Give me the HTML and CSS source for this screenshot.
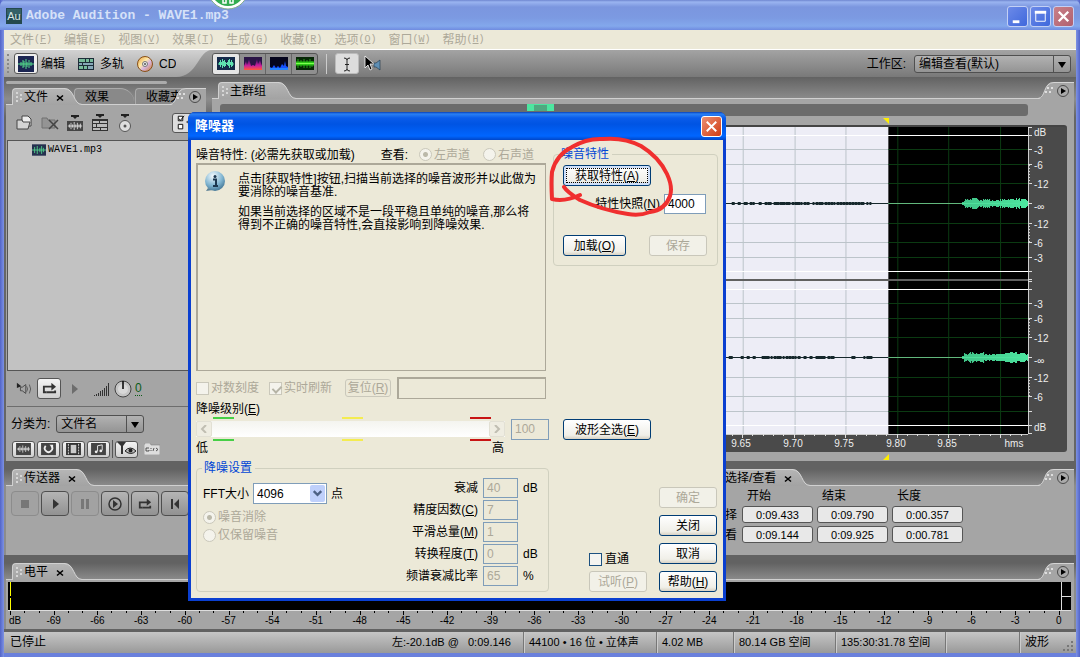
FILE: index.html
```html
<!DOCTYPE html>
<html lang="zh-CN">
<head>
<meta charset="utf-8">
<title>Adobe Audition - WAVE1.mp3</title>
<link rel="stylesheet" href="styles.css">
</head>
<body>
<svg class="defs" aria-hidden="true">
  <defs>
    <linearGradient id="lightBar" x1="0" y1="0" x2="0" y2="1"><stop offset="0" stop-color="#d2d2d2"/><stop offset="1" stop-color="#a2a2a2"/></linearGradient>
    <linearGradient id="tabFill" x1="0" y1="0" x2="0" y2="1"><stop offset="0" stop-color="#b5b5b5"/><stop offset="1" stop-color="#a3a3a3"/></linearGradient>
    <linearGradient id="cd" x1="0" y1="0" x2="1" y2="1"><stop offset="0" stop-color="#e79a31"/><stop offset=".4" stop-color="#ffe9a8"/><stop offset=".6" stop-color="#d7b4e0"/><stop offset="1" stop-color="#cf7c24"/></linearGradient>
    <linearGradient id="flame" x1="0" y1="0" x2="0" y2="1"><stop offset="0" stop-color="#3a1464"/><stop offset=".6" stop-color="#c81e9c"/><stop offset="1" stop-color="#ff5a3c"/></linearGradient>
    <radialGradient id="ball" cx=".4" cy=".25" r=".8"><stop offset="0" stop-color="#f4fbff"/><stop offset=".6" stop-color="#7fb4d0"/><stop offset="1" stop-color="#3d6f8e"/></radialGradient>
    <symbol id="grip" viewBox="0 0 8 12"><path d="M1 1h2v2h-2zM5 3h2v2h-2zM1 5h2v2h-2zM5 7h2v2h-2zM1 9h2v2h-2z" fill="#d6d6d6"/></symbol>
    <symbol id="x" viewBox="0 0 8 8"><path d="M1 1.500L7 6.500M7 1.500L1 6.500" stroke="#000" stroke-width="1.600"/></symbol>
    <symbol id="curve" viewBox="0 0 18 17"><path d="M0 0C11 0 9 16 18 16V17H0Z" fill="url(#tabFill)"/><path d="M0 .5C11 .5 9 16.500 18 16.500" fill="none" stroke="#d4d4d4"/></symbol>
    <symbol id="corner" viewBox="0 0 36 17"><path d="M0 17C8 17 4 0 16 0H36V17Z" fill="#a5a5a5"/><path d="M0 16.500C8 16 5 .5 16 .5H36" fill="none" stroke="#d4d4d4"/><path d="M7 9h2v2h-2zM11 9h2v2h-2zM9 5h2v2h-2zM13 5h2v2h-2z" fill="#dedede"/><circle cx="25" cy="9" r="5.500" fill="#aaa" stroke="#4b4b4b"/><path d="M23 6l5 3-5 3z" fill="#000"/></symbol>
    <symbol id="wave" viewBox="0 0 16 16"><rect width="16" height="16" fill="#1b2552"/><path d="M0 8h16M3 6v4M5 4v8M6 5v6M8 3v10M9 6v5M11 4v8M13 6v4" stroke="#55d98b"/></symbol>
    <symbol id="bars" viewBox="0 0 18 10"><path d="M0 5h18M2 3v4M4 1v8M6 3v4M8 0v10M10 3v4M12 1v8M14 3v4M16 2v6" stroke="currentColor" stroke-width="1"/></symbol>
    <symbol id="loop" viewBox="0 0 16 12"><path d="M5 10H2V4h9" fill="none" stroke="#333" stroke-width="2"/><path d="M10 0l5 4-5 4z" fill="#333"/><path d="M14 8v2H5" fill="none" stroke="#333" stroke-width="2"/></symbol>
  </defs>
</svg>

<div class="window">
  <header class="titlebar">
    <svg class="app-icon" viewBox="0 0 16 16"><rect width="16" height="16" fill="#24494e"/><rect x="1" y="1" width="14" height="6" fill="#356167"/></svg>
    <span class="app-icon-text">Au</span>
    <h1>Adobe Audition - WAVE1.mp3</h1>
    <div class="win-buttons">
      <button aria-label="最小化"><svg viewBox="0 0 20 20"><path d="M5 14h7v3H5z" fill="#fff"/></svg></button>
      <button aria-label="最大化"><svg viewBox="0 0 20 20"><path d="M5 6h10v9H5z" fill="none" stroke="#fff"/><path d="M4 4h12v3H4z" fill="#fff"/></svg></button>
      <button class="close" aria-label="关闭窗口"><svg viewBox="0 0 20 20"><path d="M5 5l10 10M15 5L5 15" stroke="#fff" stroke-width="2.500"/></svg></button>
    </div>
  </header>
  <svg class="bubble" viewBox="0 0 40 12"><circle cx="20" cy="-11" r="20" fill="#fff" stroke="#82a98c"/><circle cx="20" cy="-11" r="17" fill="#33ac4f"/><path d="M15 0v3h3V0M22 0v3h3V0" stroke="#fff" stroke-width="1.500" fill="none"/></svg>

  <nav class="menubar">
    <button>文件<span>(<u>F</u>)</span></button><button>编辑<span>(<u>E</u>)</span></button><button>视图<span>(<u>V</u>)</span></button><button>效果<span>(<u>T</u>)</span></button><button>生成<span>(<u>G</u>)</span></button><button>收藏<span>(<u>R</u>)</span></button><button>选项<span>(<u>O</u>)</span></button><button>窗口<span>(<u>W</u>)</span></button><button>帮助<span>(<u>H</u>)</span></button>
  </nav>

  <div class="toolbar">
    <div class="modes">
      <i class="handle"></i>
      <button class="mode"><span class="mode-on"><svg viewBox="0 0 16 16"><use href="#wave"/></svg></span>编辑</button>
      <button class="mode"><svg viewBox="0 0 16 16"><path d="M0 2h16v12H0z" fill="#1d2d38"/><path d="M1 3h6v3H1zM8 3h3v3H8zM12 3h3v3h-3zM1 10h4v3H1zM6 10h3v3H6z" fill="#77ba9a"/><path d="M1 7h3v2H1zM5 7h10v2H5zM10 10h5v3h-5z" fill="#87a8b8"/></svg>多轨</button>
      <button class="mode"><svg viewBox="0 0 16 16"><circle cx="8" cy="8" r="7.500" fill="url(#cd)" stroke="#875019"/><circle cx="8" cy="8" r="2.500" fill="#eee" stroke="#777"/><circle cx="8" cy="8" r="1" fill="#555"/></svg>CD</button>
    </div>
    <svg class="modes-edge" viewBox="0 0 36 27" preserveAspectRatio="none"><path d="M0 0H36C22 0 22 27 0 27Z" fill="url(#lightBar)"/></svg>
    <div class="views">
      <button class="on" aria-label="波形"><svg viewBox="0 0 18 13"><rect width="18" height="13" fill="#142a4a"/><path d="M1 6.500h1V5h1V3h1v2h1V2h1v2h1V3h1v2h1v1h1V5h1V3h1V2h1v3h1V3h1v2h1v1.500h1v1h-1V9h-1v1h-1V8h-1v3h-1V9h-1V8h-1V7H9v2H8v1H7V9H6v2H5V8H4v2H3V8H2V7.500H1z" fill="#5fe2b0"/></svg></button>
      <button aria-label="频谱"><svg viewBox="0 0 18 13"><rect width="18" height="13" fill="#2a1446"/><path d="M0 13V9l2-5 1 4 2-6 2 7 2-1 2 1 2-7 1 5 2-4 2 6v4z" fill="url(#flame)"/></svg></button>
      <button aria-label="声像"><svg viewBox="0 0 18 13"><rect width="18" height="13" fill="#04041c"/><path d="M0 13V10l2 1 2-3 2 3 2-2 2 2 2-4 2 2 1-5 1 5 2 1v3z" fill="#1450ff"/><path d="M0 12h18" stroke="#34b4ff"/></svg></button>
      <button aria-label="相位"><svg viewBox="0 0 18 13"><rect width="18" height="13" fill="#062806"/><path d="M2 2v9M5 3v7M8 2v9M11 3v8M14 2v9M16 4v6" stroke="#25a818"/><path d="M0 6.500h18" stroke="#2cc818" stroke-width="4"/><path d="M0 6.500h18" stroke="#7dff50"/></svg></button>
    </div>
    <i class="rule"></i>
    <button class="tool on" aria-label="时间选择"><svg viewBox="0 0 22 20"><path d="M8 4q3 0 3 2v9q0 2-3 2M14 4q-3 0-3 2M14 17q-3 0-3-2M9 10.500h4" fill="none" stroke="#222"/></svg></button>
    <button class="tool plain" aria-label="滑动"><svg viewBox="0 0 22 20"><path d="M3 2v12l3-3 2 5 2-1-2-5h4z" fill="#000" stroke="#fff" stroke-width=".8"/><path d="M12 9h2l4-3v10l-4-3h-2z" fill="#5f8fb4" stroke="#1d3446" stroke-width=".6"/></svg></button>
    <label class="workspace-label" for="ws">工作区:</label>
    <div class="gray-select ws"><select id="ws"><option>编辑查看(默认)</option></select></div>
  </div>

  <div class="top">
    <section class="files">
      <div class="tab-scroll"></div>
      <div class="tabs">
        <div class="tab"><svg class="grip"><use href="#grip"/></svg>文件<svg class="x"><use href="#x"/></svg></div><svg class="curve"><use href="#curve"/></svg>
        <div class="tab back">效果</div>
        <div class="tab back last">收藏夹</div>
        <svg class="corner"><use href="#corner"/></svg>
      </div>
      <div class="panel files-body">
        <div class="file-tools">
          <button aria-label="打开"><svg viewBox="0 0 20 18"><path d="M7 2h6l3 3v7H7z" fill="#eee" stroke="#444"/><path d="M2 15V6h5l1 2h7l-2 7z" fill="#d4d4d4" stroke="#444"/></svg></button>
          <button aria-label="关闭文件"><svg viewBox="0 0 20 18"><path d="M2 14V4h5l1 2h7v8z" fill="#949494" stroke="#707070"/><path d="M9 6l9 9M18 6l-9 9" stroke="#444" stroke-width="1.500"/></svg></button>
          <button aria-label="插入到编辑"><svg viewBox="0 0 20 18" color="#e8e8e8"><path d="M6 1h8v2h-2l-2 2-2-2H6z" fill="#222"/><rect x="2" y="7" width="16" height="10" fill="#444"/><use href="#bars" x="2" y="8" width="16" height="8"/></svg></button>
          <button aria-label="插入到多轨"><svg viewBox="0 0 20 18"><path d="M6 0h8v2h-2l-2 2-2-2H6z" fill="#222"/><path d="M2 5h16v12H2z" fill="#333"/><path d="M3 7h6v2H3zM10 7h7v2h-7zM3 10h3v3H3zM7 10h10v3H7zM3 14h7v2H3zM11 14h6v2h-6z" fill="#bbb"/></svg></button>
          <button aria-label="插入到 CD"><svg viewBox="0 0 20 18"><path d="M6 0h8v2h-2l-2 2-2-2H6z" fill="#222"/><circle cx="10" cy="12" r="5.500" fill="#ddd" stroke="#555"/><circle cx="10" cy="12" r="1.500" fill="#555"/></svg></button>
          <button class="options" aria-label="选项"><svg viewBox="0 0 20 20"><path d="M2.500 2.500h5v5h-5zM2.500 11.500h5v5h-5z" fill="#fff" stroke="#000"/><path d="M3 5l2 2 4-5" fill="none" stroke="#000"/><path d="M11 9q4-4 8 0-4 4-8 0" fill="#555"/></svg></button>
        </div>
        <div class="file-list"><div class="file"><svg viewBox="0 0 16 13"><rect width="16" height="13" fill="#25304f"/><path d="M0 6.500h16M3 3v7M6 2v9M9 4v5M11 2v9M13 4v5" stroke="#54d38c"/></svg>WAVE1.mp3</div></div>
        <div class="preview">
          <svg class="speaker" viewBox="0 0 18 14"><path d="M1 0l5 4-5 2z" fill="#222"/><path d="M5 5h2l4-3v10L7 9H5z" fill="none" stroke="#444"/><path d="M12 4q2 3 0 6M15 2q3 5 0 10" fill="none" stroke="#555"/></svg>
          <button class="pill" aria-label="循环"><svg viewBox="0 0 16 12"><use href="#loop"/></svg></button>
          <svg class="mini-play" viewBox="0 0 6 10"><path d="M0 0l6 5-6 5z" fill="#6d6d6d"/></svg>
          <svg class="steps" viewBox="0 0 16 14"><path d="M.5 14v-1M2.500 14v-2M4.500 14v-3M6.500 14v-5M8.500 14V8M10.500 14V6M12.500 14V4M14.500 14V1" stroke="#333"/></svg>
          <svg class="knob" viewBox="0 0 18 18"><circle cx="9" cy="9" r="8" fill="#c5c5c5" stroke="#444"/><circle cx="9" cy="9" r="5" fill="#d8d8d8"/><path d="M9 1v8" stroke="#000" stroke-width="1.500"/></svg>
          <span class="gain">0</span>
        </div>
        <div class="sort"><label for="sort">分类为:</label><div class="gray-select"><select id="sort"><option>文件名</option></select></div></div>
        <div class="filters">
          <button class="pill" aria-label="音频"><svg viewBox="0 0 16 14" color="#eee"><rect width="16" height="13" fill="#444"/><use href="#bars" x="1" y="2" width="14" height="9"/></svg></button>
          <button class="pill" aria-label="循环文件"><svg viewBox="0 0 16 14"><rect width="16" height="13" fill="#444"/><path d="M5 3a4 4 0 1 0 6 0" fill="none" stroke="#eee" stroke-width="2"/><path d="M9 2h4v4z" fill="#eee"/></svg></button>
          <button class="pill" aria-label="视频"><svg viewBox="0 0 16 14"><rect width="16" height="13" fill="#333"/><path d="M5 2h6v9H5z" fill="#ccc"/><path d="M2.500 1v11M13.500 1v11" stroke="#ddd" stroke-dasharray="2 1"/></svg></button>
          <button class="pill" aria-label="MIDI"><svg viewBox="0 0 16 14"><rect width="16" height="13" fill="#444"/><path d="M7 9V3l5-1v6" fill="none" stroke="#eee"/><circle cx="5.500" cy="9.500" r="1.500" fill="#eee"/><circle cx="10.500" cy="8.500" r="1.500" fill="#eee"/></svg></button>
          <i class="rule"></i>
          <button class="pill filter" aria-label="筛选"><svg viewBox="0 0 20 14"><path d="M0 0h9L6 4v8H4V4z" fill="#333"/><path d="M8 9q5-6 11 0-5 5-11 0" fill="#bbb" stroke="#222"/><circle cx="13.500" cy="8.500" r="2" fill="#222"/></svg></button>
          <button class="pathbtn" aria-label="完整路径"><svg viewBox="0 0 16 12"><path d="M0 2l1-2h5l1 2h9v10H0z" fill="#ddd" stroke="#777" stroke-width=".5"/><path d="M5 5H2v3h3V7M7 5v1M7 7v1M9 8l1-3M12 5l2 1.500-2 1.500" fill="none" stroke="#333" stroke-width=".8"/></svg></button>
        </div>
      </div>
    </section>

    <section class="main-group">
      <div class="tabs">
        <div class="tab"><svg class="grip"><use href="#grip"/></svg>主群组</div><svg class="curve"><use href="#curve"/></svg>
        <svg class="corner"><use href="#corner"/></svg>
      </div>
      <div class="panel wave-body">
        <div class="overview"><i></i></div>
        <div class="marker-row"><svg viewBox="0 0 6 6"><path d="M0 0h6v6z" fill="#ffee00"/></svg></div>
        <div class="display">
          <svg id="canvas" class="canvas" viewBox="218 127 810 307" preserveAspectRatio="none"></svg>
          <svg id="scale" class="scale" viewBox="0 127 39 307"></svg>
          <svg id="timeline" class="timeline" viewBox="218 434 849 18" preserveAspectRatio="xMaxYMin slice"></svg>
        </div>
        <div class="marker-row"><svg viewBox="0 0 6 6"><path d="M6 0v6H0z" fill="#ffee00"/></svg></div>
      </div>
    </section>
  </div>

  <div class="middle">
    <section class="transport">
      <div class="tabs"><div class="tab"><svg class="grip"><use href="#grip"/></svg>传送器<svg class="x"><use href="#x"/></svg></div><svg class="curve"><use href="#curve"/></svg></div>
      <div class="panel transport-body">
        <button disabled aria-label="停止"><svg viewBox="0 0 14 12"><path d="M3 2h8v8H3z" fill="#777"/></svg></button>
        <button aria-label="播放"><svg viewBox="0 0 14 12"><path d="M5 1l6 5-6 5z" fill="#333"/></svg></button>
        <button disabled aria-label="暂停"><svg viewBox="0 0 14 12"><path d="M3 1h3v10H3zM8 1h3v10H8z" fill="#777"/></svg></button>
        <button class="round" aria-label="播放到结尾"><svg viewBox="0 0 14 14"><circle cx="7" cy="7" r="6" fill="none" stroke="#333" stroke-width="1.500"/><path d="M5 3l5 4-5 4z" fill="#333"/></svg></button>
        <button aria-label="循环播放"><svg viewBox="0 0 16 12"><use href="#loop"/></svg></button>
        <button aria-label="转到开头"><svg viewBox="0 0 14 12"><path d="M3 1h2v10H3zM11 1v10L6 6z" fill="#333"/></svg></button>
      </div>
    </section>
    <section class="selection">
      <div class="tabs"><div class="tab"><svg class="grip"><use href="#grip"/></svg>选择/查看<svg class="x"><use href="#x"/></svg></div><svg class="curve"><use href="#curve"/></svg><svg class="corner"><use href="#corner"/></svg></div>
      <div class="panel">
        <table class="times">
          <tr><td></td><th>开始</th><th>结束</th><th>长度</th></tr>
          <tr><th>选择</th><td><input aria-label="选择开始" value="0:09.433"></td><td><input aria-label="选择结束" value="0:09.790"></td><td><input aria-label="选择长度" value="0:00.357"></td></tr>
          <tr><th>查看</th><td><input aria-label="查看开始" value="0:09.144"></td><td><input aria-label="查看结束" value="0:09.925"></td><td><input aria-label="查看长度" value="0:00.781"></td></tr>
        </table>
      </div>
    </section>
  </div>

  <section class="levels">
    <div class="tabs"><div class="tab"><svg class="grip"><use href="#grip"/></svg>电平<svg class="x"><use href="#x"/></svg></div><svg class="curve"><use href="#curve"/></svg><svg class="corner"><use href="#corner"/></svg></div>
    <div class="panel levels-body">
      <div class="meter"><i class="floor"></i><i class="clip"></i></div>
      <div class="db-ruler"><span><b>dB</b></span><span><b>-69</b></span><span><b>-66</b></span><span><b>-63</b></span><span><b>-60</b></span><span><b>-57</b></span><span><b>-54</b></span><span><b>-51</b></span><span><b>-48</b></span><span><b>-45</b></span><span><b>-42</b></span><span><b>-39</b></span><span><b>-36</b></span><span><b>-33</b></span><span><b>-30</b></span><span><b>-27</b></span><span><b>-24</b></span><span><b>-21</b></span><span><b>-18</b></span><span><b>-15</b></span><span><b>-12</b></span><span><b>-9</b></span><span><b>-6</b></span><span><b>-3</b></span><span class="zero"><b>0</b></span></div>
    </div>
  </section>

  <footer class="status">
    <span class="state">已停止</span>
    <span class="pos">左:-20.1dB @ &nbsp; 0:09.146</span>
    <span class="format">44100 • 16 位 • 立体声</span>
    <span class="size">4.02 MB</span>
    <span class="disk">80.14 GB 空间</span>
    <span class="remain">135:30:31.78 空间</span>
    <span class="blank"></span>
    <span class="kind">波形</span>
    <svg class="sizer" viewBox="0 0 12 12"><path d="M9 0h2v2H9zM5 4h2v2H5zM9 4h2v2H9zM1 8h2v2H1zM5 8h2v2H5zM9 8h2v2H9z" fill="#777"/></svg>
  </footer>
</div>

<form class="dialog" role="dialog" aria-label="降噪器" onsubmit="return false">
  <header class="dialog-title"><h2>降噪器</h2><button type="button" aria-label="关闭对话框"><svg viewBox="0 0 20 20"><path d="M5 5l10 10M15 5L5 15" stroke="#fff" stroke-width="2"/></svg></button></header>
  <div class="dialog-body">
    <div class="left">
      <div class="profile-row"><span>噪音特性: (必需先获取或加载)</span><span class="view-label">查看:</span>
        <label class="off"><input type="radio" name="ch" checked disabled>左声道</label>
        <label class="off second"><input type="radio" name="ch" disabled>右声道</label></div>
      <div class="info">
        <svg viewBox="0 0 22 22"><path d="M4 17l-2 3 7-1z" fill="#5b7f94"/><circle cx="11" cy="10" r="10" fill="url(#ball)"/><circle cx="11" cy="5.500" r="1.500" fill="#1d3850"/><path d="M9 8.500h3v6M9 15h5" fill="none" stroke="#1d3850" stroke-width="2"/></svg>
        <div><p>点击[获取特性]按钮,扫描当前选择的噪音波形并以此做为<br>要消除的噪音基准.</p><p>如果当前选择的区域不是一段平稳且单纯的噪音,那么将<br>得到不正确的噪音特性,会直接影响到降噪效果.</p></div>
      </div>
      <div class="opts">
        <label class="off"><input type="checkbox" disabled>对数刻度</label>
        <label class="off"><input type="checkbox" checked disabled>实时刷新</label>
        <button type="button" class="reset" disabled>复位(<u>R</u>)</button>
        <div class="well"></div>
      </div>
      <label class="level-label" for="level">降噪级别(<u>E</u>)</label>
      <div class="level-row">
        <div class="scroll">
          <div class="marks"><i></i><i></i><i></i></div>
          <div class="track"><button type="button" disabled aria-label="降低"><svg viewBox="0 0 8 8"><path d="M6 0L2 4l4 4" fill="none" stroke="#c0beb2" stroke-width="2"/></svg></button><span></span><button type="button" disabled aria-label="提高"><svg viewBox="0 0 8 8"><path d="M2 0l4 4-4 4" fill="none" stroke="#c0beb2" stroke-width="2"/></svg></button></div>
          <div class="marks"><i></i><i></i><i></i></div>
        </div>
        <input id="level" value="100" disabled>
      </div>
      <div class="ends"><span>低</span><span>高</span></div>
      <fieldset class="settings">
        <legend>降噪设置</legend>
        <div class="fft">
          <div class="fft-row"><label for="fft">FFT大小</label><div class="xp-select"><select id="fft"><option>4096</option></select><svg viewBox="0 0 16 17"><path d="M4 6l4 4 4-4" fill="none" stroke="#4d6185" stroke-width="2.500"/></svg></div>点</div>
          <label class="off"><input type="radio" name="keep" checked disabled>噪音消除</label>
          <label class="off"><input type="radio" name="keep" disabled>仅保留噪音</label>
        </div>
        <div class="params">
          <label for="p1">衰减</label><input id="p1" value="40" disabled><span>dB</span>
          <label for="p2">精度因数(<u>C</u>)</label><input id="p2" value="7" disabled><span></span>
          <label for="p3">平滑总量(<u>M</u>)</label><input id="p3" value="1" disabled><span></span>
          <label for="p4">转换程度(<u>T</u>)</label><input id="p4" value="0" disabled><span>dB</span>
          <label for="p5">频谱衰减比率</label><input id="p5" value="65" disabled><span>%</span>
        </div>
      </fieldset>
    </div>
    <div class="right">
      <fieldset class="profile">
        <legend>噪音特性</legend>
        <button type="button" class="xp wide focus">获取特性(<u>A</u>)</button>
        <div class="snap"><label for="snap">特性快照(<u>N</u>)</label><input id="snap" value="4000"></div>
        <div class="loadsave"><button type="button" class="xp load">加载(<u>O</u>)</button><button type="button" class="xp" disabled>保存</button></div>
      </fieldset>
      <button type="button" class="xp wide select-all">波形全选(<u>E</u>)</button>
      <div class="actions">
        <div class="bypass"><label><input type="checkbox">直通</label><button type="button" class="xp" disabled>试听(<u>P</u>)</button></div>
        <div class="stack"><button type="button" class="xp" disabled>确定</button><button type="button" class="xp">关闭</button><button type="button" class="xp">取消</button><button type="button" class="xp">帮助(<u>H</u>)</button></div>
      </div>
    </div>
  </div>
</form>
<svg class="ink" viewBox="545 130 130 90"><path d="M552 199Q551 182 552 172Q556 155 572 147Q587 138 603 139Q624 137 641 146Q659 157 667 174Q673 187 670 196Q665 210 650 212Q640 216 628 214Q602 210 580 200Q567 192 564 187M552 199Q565 202 580 195" fill="none" stroke="#f02f2f" stroke-width="4" stroke-linecap="round" stroke-linejoin="round"/></svg>
<script src="wave.js"></script>
</body>
</html>
```

FILE: styles.css
```css
* { box-sizing: border-box; }
body, button, input, select { font-family: "Liberation Sans", "Noto Sans CJK SC", sans-serif; font-size: 12px; color: #000; }
body { margin: 0; line-height: 14px; background: #6a80d4; }
button { padding: 0; border: 0; background: none; display: flex; align-items: center; justify-content: center; white-space: nowrap; line-height: 14px; }
h1, h2, p { margin: 0; font-size: inherit; }
svg { display: block; flex: none; overflow: hidden; }
label { white-space: nowrap; }
.defs { position: absolute; width: 0; height: 0; }

.window { min-height: 100vh; display: flex; flex-direction: column; padding: 0 4px 4px; background: linear-gradient(90deg, #5264c8, #7d92e4 4px, #6a80dc 4px, #6a80dc calc(100% - 4px), #7d92e4 calc(100% - 4px), #5264c8); }

.titlebar { height: 30px; margin: 0 -4px; padding: 2px 6px 0; display: flex; align-items: center; background: linear-gradient(#6f86d0, #9ab4f0 2px, #7b96df 7px, #7c9ae2 18px, #83a8ec 26px, #6f8be0); border-radius: 6px 6px 0 0; }
.app-icon { width: 16px; height: 16px; }
.app-icon-text { width: 16px; margin-left: -16px; z-index: 1; font-size: 11px; color: #d8e8e8; text-align: center; }
.titlebar h1 { flex: 1; padding-left: 4px; font: bold 13px/16px "Liberation Mono", monospace; color: #d6e1f8; }
.win-buttons { display: flex; gap: 2px; }
.win-buttons button { width: 21px; height: 21px; border: 1px solid #c3d0f5; border-radius: 3px; background: linear-gradient(135deg, #6c8ae8, #3f68dc); }
.win-buttons .close { background: linear-gradient(135deg, #c98088, #b06070); }
.win-buttons svg { width: 19px; height: 19px; }
.bubble { position: absolute; left: 208px; top: 0; width: 40px; height: 12px; }

.menubar { height: 20px; padding-left: 6px; display: flex; gap: 12px; background: #ece9d8; border-bottom: 1px solid #fff; }
.menubar button { color: #aca899; }
.menubar span { font: 10px/14px "Liberation Mono", monospace; }

.toolbar { height: 27px; display: flex; align-items: center; background: linear-gradient(#a3a3a3, #797979); padding-right: 5px; }
.modes { align-self: stretch; display: flex; align-items: center; background: linear-gradient(#d2d2d2, #a2a2a2); padding-left: 3px; }
.handle { width: 3px; height: 19px; border-left: 2px dotted #888; margin-right: 4px; }
.mode { gap: 6px; margin-right: 13px; }
.mode:first-of-type { gap: 3px; }
.mode:last-child { margin-right: 0; }
.mode svg { width: 16px; height: 16px; }
.mode-on { width: 24px; height: 21px; border: 1px solid #555; border-radius: 3px; background: #eee; display: grid; place-items: center; }
.modes-edge { width: 36px; height: 27px; }
.views { display: flex; border: 1px solid #555; border-radius: 3px; background: #8f8f8f; }
.views button { width: 26px; height: 20px; border-left: 1px solid #666; }
.views .on { background: #e6e6e6; border-left: 0; border-radius: 2px; }
.views svg { width: 18px; height: 13px; }
.rule { width: 1px; height: 20px; background: #ccc; }
.toolbar .rule { margin: 0 8px; }
.tool { width: 24px; height: 21px; border-radius: 3px; }
.tool.on { background: #ddd; border: 1px solid #bbb; }
.tool svg { width: 22px; height: 20px; }
.tool.plain { margin-left: 2px; }
.workspace-label { margin-left: auto; margin-right: 8px; }
.gray-select { position: relative; border: 1px solid #505050; border-radius: 3px; background: linear-gradient(#b2b2b2, #949494); }
.gray-select select { appearance: none; width: 100%; height: 16px; padding: 0 4px; border: 0; background: none; display: block; line-height: 14px; }
.gray-select::before { content: ""; position: absolute; right: 4px; top: 6px; border: 4px solid transparent; border-top: 6px solid #000; border-bottom: 0; pointer-events: none; }
.gray-select::after { content: ""; position: absolute; right: 0; top: 0; bottom: 0; width: 16px; border-left: 1px solid #505050; pointer-events: none; }
.gray-select.ws { width: 157px; }

.top { flex: 1; display: flex; gap: 6px; padding: 4px 2px 0; background: linear-gradient(#626262, #8c8c8c 22px, #666 40px); }
.tabs { display: flex; height: 17px; border-bottom: 1px solid #d0d0d0; }
.tab { height: 17px; display: flex; align-items: center; gap: 1px; padding-left: 2px; border-top: 1px solid #d0d0d0; border-left: 1px solid #d0d0d0; border-radius: 4px 0 0 0; background: linear-gradient(#b5b5b5, #a3a3a3); white-space: nowrap; margin-left: 6px; flex: none; }
.grip { width: 8px; height: 12px; }
.tab .x { width: 8px; height: 8px; margin: 2px 0 0 7px; }
.curve { width: 18px; height: 17px; }
.corner { width: 36px; height: 17px; margin-left: auto; }
.panel { background: #a5a5a5; }
.files { width: 200px; display: flex; flex-direction: column; }
.tab-scroll { width: 161px; height: 3px; margin-bottom: 4px; border-radius: 2px; background: #ababab; }
.files .curve { margin-right: -8px; z-index: 1; }
.tab.back { height: 16px; width: 60px; margin: 0; padding-left: 10px; background: #898989; border-radius: 4px 14px 0 0; border-color: #aaa; }
.tab.back.last { width: 50px; margin-left: 1px; border-radius: 4px 0 0 0; }
.files .corner { margin-left: -15px; z-index: 1; }
.files-body { flex: 1; display: flex; flex-direction: column; padding-left: 1px; }
.file-tools { height: 35px; display: flex; align-items: center; gap: 5px; padding-left: 8px; }
.file-tools svg { width: 20px; height: 18px; }
.file-tools .options { margin-left: 32px; background: #ddd; border: 1px solid #555; border-radius: 3px; padding: 0 2px; }
.file-list { flex: 1; padding: 2px 0 0 24px; background: #c2c2c2; border: 1px solid #555; }
.file { display: flex; align-items: center; gap: 2px; font: 10px/14px "Liberation Mono", monospace; }
.file svg { width: 14px; height: 12px; }
.preview { height: 36px; display: flex; align-items: center; padding-left: 9px; border-bottom: 1px solid #6d6d6d; }
.speaker { width: 16px; height: 14px; }
.pill { width: 23px; height: 17px; border: 1px solid #555; border-radius: 3px; background: linear-gradient(#f4f4f4, #cfcfcf); }
.pill svg { width: 15px; height: 13px; }
.pill.filter svg { width: 20px; height: 14px; }
.preview .pill { width: 24px; height: 21px; margin: 0 11px 0 5px; }
.mini-play { width: 6px; height: 10px; }
.steps { width: 16px; height: 14px; margin-left: 16px; }
.knob { width: 18px; height: 18px; margin-left: 4px; }
.gain { margin-left: 3px; color: #0b5c16; border-bottom: 1px dotted #0b5c16; }
.sort { height: 33px; display: flex; align-items: center; gap: 6px; padding-left: 4px; }
.sort .gray-select { width: 88px; }
.filters { display: flex; align-items: center; gap: 2px; padding: 0 0 3px 5px; }
.filters .rule { height: 18px; background: #555; }
.filters .pathbtn { margin-left: 4px; }
.pathbtn svg { width: 16px; height: 12px; }
.main-group { flex: 1; min-width: 0; display: flex; flex-direction: column; padding-top: 1px; }
.main-group .tab { padding-right: 12px; }
.wave-body { flex: 1; display: flex; flex-direction: column; padding: 5px 7px 0 8px; }
.overview { height: 12px; margin-right: 39px; background: #6b6b6b; border-radius: 3px; }
.overview i { display: block; width: 27px; height: 7px; margin-left: 38%; background: #50a880; border: 1px solid #4de6a0; border-width: 1px 7px 0; }
.marker-row { height: 9px; padding: 2px 178px 0 0; display: flex; justify-content: flex-end; }
.marker-row svg { width: 6px; height: 6px; }
.display { flex: 1; min-height: 0; display: grid; grid-template: minmax(0, 1fr) 18px / minmax(0, 1fr) 39px; background: #4a4a4a; border-top: 2px solid #444; border-radius: 3px; }
.canvas { width: 100%; height: 100%; }
.scale { width: 39px; height: 100%; }
.timeline { grid-column: 1 / 3; width: 100%; height: 18px; }
svg text { font-family: "Liberation Sans", sans-serif; font-size: 10px; fill: #eee; }

.middle { display: flex; padding: 8px 2px 0; background: linear-gradient(#626262 8px, #8c8c8c 25px); }
.transport { flex: 1; display: flex; flex-direction: column; }
.selection { width: 374px; }
.selection .tab { margin-left: 13px; }
.selection .panel { padding: 3px 0 9px 6px; }
.transport-body { flex: 1; display: flex; gap: 2px; padding: 5px; align-items: flex-start; }
.transport-body button { width: 28px; height: 25px; border: 1px solid #4e4e4e; border-radius: 4px; background: linear-gradient(#b4b4b4, #929292); }
.transport-body button:disabled { border-color: #8c8c8c; background: #a2a2a2; }
.transport-body svg { width: 14px; height: 12px; }
.transport-body .round svg { height: 14px; }
.times { border-spacing: 0; }
.times th, .times td { padding: 0 4px 3px 0; font-weight: normal; text-align: left; line-height: 14px; }
.times th:first-child { width: 36px; padding-left: 7px; }
.times tr:first-child th { padding-left: 5px; }
.times input { display: block; width: 71px; height: 17px; padding: 0; border: 1px solid #555; border-radius: 3px; background: #e8e8e8; text-align: center; font-size: 11px; }

.levels { padding: 8px 2px 0; background: linear-gradient(#626262 8px, #8c8c8c 25px); border-bottom: 3px solid #626262; }
.levels-body { padding: 2px 3px 0 2px; }
.meter { height: 29px; display: flex; justify-content: space-between; background: #000; border-bottom: 1px solid #ddd; }
.floor { width: 1px; margin-left: 2px; background: linear-gradient(#ff0 14px, #000 14px 16px, #ff0 16px); }
.clip { width: 10px; border-left: 1px solid #ddd; background: linear-gradient(#000 14px, #ddd 14px 15px, #000 15px); }
.db-ruler { height: 18px; display: flex; padding: 0 11px 0 2px; }
.db-ruler span { flex: 1 1 0; min-width: 0; display: flex; padding-top: 4px; background: linear-gradient(#000, #000) 0 0 / 1px 4px no-repeat, linear-gradient(#000, #000) 33% 0 / 1px 2px no-repeat, linear-gradient(#000, #000) 67% 0 / 1px 2px no-repeat; }
.db-ruler b { width: 20px; margin-left: -10px; flex: none; text-align: center; font-weight: normal; font-size: 10px; line-height: 12px; }
.db-ruler span:first-child b { margin-left: -5px; }
.db-ruler .zero { flex: 0 0 1px; }

.status { height: 21px; display: flex; align-items: stretch; background: linear-gradient(#c6c6c6, #999); font-size: 11px; line-height: 20px; white-space: nowrap; }
.status span { padding-left: 5px; border-left: 1px solid #777; box-shadow: inset 1px 0 #ccc; }
.status .state { flex: 1; border: 0; box-shadow: none; font-size: 12px; padding-left: 6px; }
.status .pos { width: 131px; border: 0; box-shadow: none; padding: 0; }
.status .format { width: 133px; }
.status .size { width: 77px; }
.status .disk { width: 102px; }
.status .remain { width: 110px; }
.status .blank { width: 74px; }
.status .kind { width: 43px; font-size: 12px; }
.sizer { width: 12px; height: 12px; align-self: flex-end; margin-right: 2px; }

.dialog { position: absolute; left: 188px; top: 112px; width: 538px; display: flex; flex-direction: column; padding: 0 3px 3px; background: #0a3fd0; border-radius: 7px 7px 0 0; }
.dialog-title { height: 28px; margin: 0 -3px; padding: 0 4px 0 7px; display: flex; align-items: center; justify-content: space-between; border-radius: 7px 7px 0 0; background: linear-gradient(#0840b8, #2a80f4 2px, #0a5cea 6px, #0054e3 12px, #0066ff 24px, #0046c8); color: #fff; font-size: 13px; }
.dialog-title button { width: 21px; height: 21px; border: 1px solid #fff; border-radius: 3px; background: linear-gradient(135deg, #ec8f72, #d03c14); }
.dialog-title svg { width: 19px; height: 19px; }
.dialog-body { display: flex; justify-content: space-between; padding: 6px 5px; background: #ece9d8; }
.dialog-body input, .dialog-body select { margin: 0; line-height: 14px; }
.left { width: 353px; display: flex; flex-direction: column; }
.profile-row { display: flex; align-items: center; height: 17px; white-space: nowrap; }
.view-label { margin-left: auto; margin-right: 11px; }
.off { display: flex; align-items: center; gap: 2px; color: #aca899; }
.off.second { margin: 0 15px 0 13px; }
input[type="radio"], input[type="checkbox"] { appearance: none; width: 13px; height: 13px; padding: 0; border: 1px solid #1c5180; background: #f4f4f0; flex: none; }
input[type="radio"] { border-radius: 50%; }
input[type="radio"]:disabled, input[type="checkbox"]:disabled { border-color: #cac8bb; background: #f4f3ec; }
input[type="radio"]:disabled:checked { background: radial-gradient(#bbb9aa 2px, #f4f3ec 3px); }
input[type="checkbox"]:checked::before { content: ""; display: block; width: 4px; height: 7px; margin: 1px 0 0 4px; border: solid #b5b3a5; border-width: 0 2px 2px 0; transform: rotate(45deg); }
.info { height: 208px; width: 350px; display: flex; gap: 12px; padding: 6px 0 0 6px; border: 1px solid #aca899; border-width: 2px 1px 1px 2px; line-height: 13px; white-space: nowrap; }
.info svg { width: 22px; height: 22px; }
.info p { margin: 2px 0 7px; }
.opts { display: flex; align-items: center; gap: 10px; width: 350px; height: 22px; margin-top: 6px; }
.reset { width: 46px; height: 18px; margin-left: 3px; border: 1px solid #cac8bb; border-radius: 3px; color: #aca899; }
.well { flex: 1; height: 22px; margin-left: -4px; border: 1px solid #aca899; border-width: 2px 1px 1px 2px; }
.level-label { margin-top: 3px; }
.level-row { display: flex; align-items: center; justify-content: space-between; margin-top: 1px; height: 24px; }
.scroll { width: 309px; }
.marks { display: flex; justify-content: space-between; padding: 0 14px 0 17px; }
.marks i { width: 21px; height: 2px; background: #46cf46; }
.marks i:nth-child(2) { background: #f4ec50; }
.marks i:nth-child(3) { background: #c81414; }
.track { display: flex; margin: 2px 0; height: 16px; background: linear-gradient(#f4f4ef, #fff); }
.track button { width: 16px; border: 1px solid #e2e0d4; border-radius: 2px; background: #efede2; }
.track span { flex: 1; }
.track svg { width: 8px; height: 8px; }
.dialog-body input:not([type]) { border: 1px solid #7f9db9; padding: 0 3px; background: #fff; width: 35px; height: 20px; }
.dialog-body input:not([type]):disabled { background: #ece9d8; color: #aca899; }
.dialog-body .level-row input#level { width: 38px; height: 21px; }
.ends { display: flex; justify-content: space-between; padding-right: 45px; }
fieldset { margin: 0; min-width: 0; border: 1px solid #d0d0bf; border-radius: 4px; }
legend { padding: 0 3px 0 2px; color: #0046d5; line-height: 14px; }
.settings { margin-top: 6px; padding: 3px 9px 5px 6px; display: flex; justify-content: space-between; }
.settings legend { margin-left: -1px; }
.fft { display: flex; flex-direction: column; gap: 4px; padding-top: 5px; }
.fft-row { display: flex; align-items: center; gap: 4px; margin-bottom: 2px; }
.xp-select { position: relative; width: 74px; height: 21px; border: 1px solid #7f9db9; background: #fff; }
.xp-select select { appearance: none; width: 100%; height: 19px; border: 0; padding: 0 3px; background: none; }
.xp-select svg { position: absolute; right: 1px; top: 1px; width: 15px; height: 17px; background: #bfd0fb; border-radius: 2px; pointer-events: none; }
.params { display: grid; grid-template-columns: auto 35px 16px; gap: 2px 5px; align-items: center; }
.params label { text-align: right; }
.right { width: 165px; display: flex; flex-direction: column; }
.profile { margin-top: 1px; padding: 4px 9px 9px; }
.profile legend { margin-left: -4px; }
.xp { width: 58px; height: 21px; border: 1px solid #003c74; border-radius: 3px; background: linear-gradient(#fff, #f0efe8 80%, #d8d2c4); }
.xp:disabled { border-color: #c9c7ba; background: #f2f1e8; color: #aca899; }
.xp.wide { width: 88px; }
.xp.focus { box-shadow: inset 0 0 0 2px #cfe0fa; outline: 1px dotted #000; outline-offset: -4px; }
.snap { display: flex; align-items: center; justify-content: flex-end; gap: 4px; margin: 8px 2px 21px 0; }
.dialog-body input#snap { width: 42px; }
.loadsave { display: flex; justify-content: space-between; padding-right: 1px; }
.xp.load { width: 63px; }
.select-all { margin: 153px 0 0 10px; }
.actions { margin-top: auto; display: flex; justify-content: flex-end; gap: 12px; align-items: flex-end; padding-right: 1px; }
.bypass label { display: flex; align-items: center; gap: 3px; margin-bottom: 5px; }
.stack { display: flex; flex-direction: column; gap: 7px; }
.ink { position: absolute; left: 545px; top: 130px; width: 130px; height: 90px; pointer-events: none; }
```

FILE: wave.js
```js
const canvas = document.getElementById("canvas");
const scale = document.getElementById("scale");
const timeline = document.getElementById("timeline");
const SELECTION_END = 888;

const rect = (x, y, w, h, fill) => `<rect x="${x}" y="${y}" width="${w}" height="${h}" fill="${fill}"/>`;

let out = rect(218, 127, 810, 307, "#000") + rect(218, 127, 670, 307, "#ededf6");
const rows = [149, 164, 183, 223, 242, 257, 303, 318, 337, 377, 396, 411];
const columns = [];
for (let i = -9; i < 6; i++) columns.push(Math.round(742 + i * 51.6));
rows.forEach(y => { out += rect(218, y, 670, 1, "#bcc4ca") + rect(SELECTION_END, y, 140, 1, "#0b3a12"); });
columns.forEach(x => { out += rect(x, 127, 1, 307, x < SELECTION_END ? "#bcc4ca" : "#0b3a12"); });
[135, 271, 289, 425].forEach(y => { out += rect(218, y, 810, 1, "#fff"); });
out += rect(218, 279, 810, 2, "#606060");

let seed = 7;
const random = () => (seed = (seed * 16807) % 2147483647) / 2147483647;
[203, 357].forEach(y => {
  out += rect(218, y, 670, 1, "#16282c") + rect(SELECTION_END, y, 140, 1, "#62b87c");
  for (let x = 728; x < 872; x += 3) {
    if (random() > (x < 760 ? 0.6 : 0.25)) out += rect(x, y - 1, 2 + Math.round(random() * 2), 3, "#16282c");
  }
  for (let x = 962; x < 1028; x++) {
    const envelope = 3 + 2 * Math.abs(Math.sin((x - 957) / 12));
    const h = x < 964 ? 1 : Math.round(envelope * (0.5 + random() * 0.5));
    out += rect(x, y - h, 1, 2 * h + 1, "#4de6a0");
  }
});
canvas.innerHTML = out;

out = rect(0, 127, 1, 307, "#ccc");
[[133, "dB"], [151, "-3"], [166, "-6"], [185, "-12"], [207, "-∞"], [225, "-12"], [244, "-6"], [259, "-3"],
 [305, "-3"], [320, "-6"], [339, "-12"], [361, "-∞"], [379, "-12"], [398, "-6"], [428, "dB"]]
  .forEach(([y, label]) => { out += `<text x="6" y="${y + 3}">${label}</text>`; });
[...rows, 127, 135, 203, 271, 279, 281, 289, 357, 425, 433].forEach(y => { out += rect(0, y, 4, 1, "#ddd"); });
for (const mid of [203, 357]) {
  for (let d = 20; d < 40; d += 3) out += rect(0, mid - d, 2, 1, "#ccc") + rect(0, mid + d, 2, 1, "#ccc");
}
scale.innerHTML = out;

out = rect(218, 434, 810, 1, "#ccc");
for (let x = 742 - 51.6 * 10; x < 1028; x += 10.32) out += rect(Math.round(x), 434, 1, 2, "#ddd");
columns.forEach((x, i) => {
  out += rect(x, 434, 1, 4, "#ddd");
  const time = 9.65 + (i - 9) * 0.05;
  if (x < 990) out += `<text x="${x - 1}" y="447" text-anchor="middle">${time.toFixed(2)}</text>`;
});
out += '<text x="1014" y="447" text-anchor="middle">hms</text>';
timeline.innerHTML = out;
```
